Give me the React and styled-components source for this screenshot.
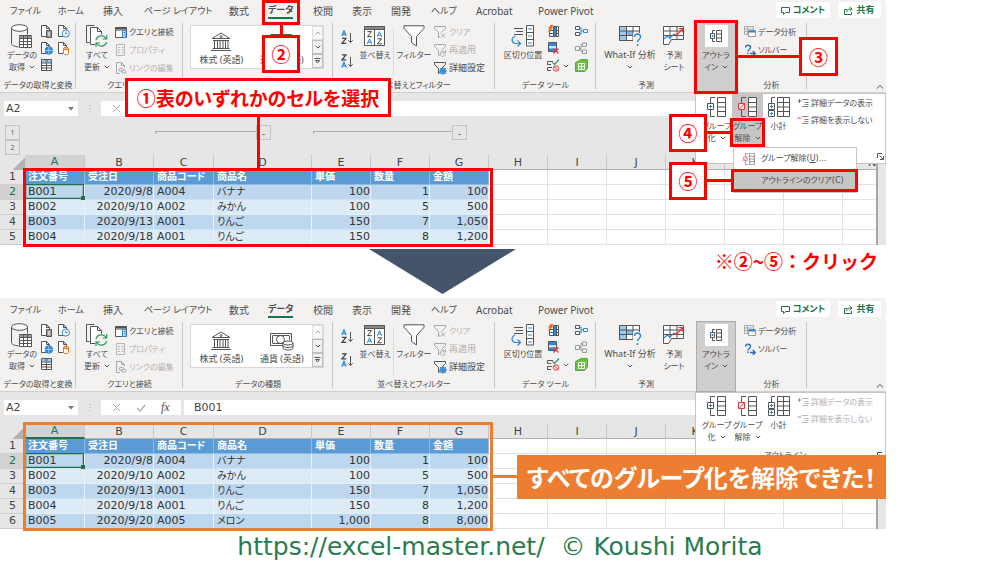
import React from 'react';
import styled, { createGlobalStyle, css } from 'styled-components';

const UI = '"Noto Sans", "Noto Sans CJK JP", sans-serif';
const CELL = '"DejaVu Sans", "Noto Sans CJK JP", sans-serif';
const RED = '#ff0000';
const ORANGE = '#ed7d31';
const GREEN = '#217346';

const GlobalStyle = createGlobalStyle`
  *, *::before, *::after { box-sizing: border-box; }
  body { margin: 0; background: #fff; overflow-x: hidden; }
  button, input { font: inherit; color: inherit; border: 0; margin: 0; padding: 0; background: none; }
  svg { flex: 0 0 auto; }
`;

const Page = styled.main`
  font-family: ${UI};
  font-size: 8px;
  line-height: 12px;
  color: #4c4c4c;
  font-feature-settings: 'palt';
`;

/* ---------- workbook window ---------- */
const Workbook = styled.section`
  position: relative;
  width: 88.6%;
  background: #e6e6e6;
`;

const TabBar = styled.nav`
  display: grid;
  grid-template-columns: 48px 45px 41px 85px 39px 45px 39px 39px 40px 45px 62px 1fr auto;
  height: 20px;
  padding-left: 10px;
  background: #f3f2f1;
`;

const Tab = styled.button`
  justify-self: start;
  height: 19px;
  font-size: ${(p) => (p.$kana ? 9 : 10)}px;
  line-height: 14px;
  border-top: 2px solid transparent;
  white-space: nowrap;
  ${(p) =>
    p.$active &&
    css`
      font-weight: 700;
      border-bottom: 2px solid ${GREEN};
    `}
`;

const TabActions = styled.div`
  display: flex;
  gap: 8px;
  padding: 2px 5px 0 0;
`;

const ActionButton = styled.button`
  display: flex;
  align-items: center;
  justify-content: center;
  gap: 3px;
  width: ${(p) => p.$width}px;
  height: 16px;
  border-radius: 2px;
  background: #fff;
  color: ${GREEN};
  font-size: 9px;
  font-weight: 700;
  white-space: nowrap;
`;

const Ribbon = styled.div`
  display: flex;
  position: relative;
  height: 73px;
  background: #f3f2f1;
  border-bottom: 1px solid #d0cfce;
`;

const Group = styled.div`
  position: relative;
  display: flex;
  flex: 0 0 auto;
  flex-direction: column;
  width: ${(p) => p.$width}px;
  padding-top: 3px;
  &::after {
    content: '';
    display: ${(p) => (p.$open ? 'none' : 'block')};
    position: absolute;
    right: 0;
    top: 3px;
    bottom: 3px;
    border-right: 1px solid #c8c6c4;
  }
`;

const GroupBody = styled.div`
  display: flex;
  flex: 1;
  padding-left: ${(p) => p.$pad}px;
`;

const GroupLabel = styled.div`
  height: 14px;
  line-height: 14px;
  text-align: center;
  white-space: nowrap;
`;

const BigButton = styled.button`
  display: flex;
  flex: 0 0 auto;
  flex-direction: column;
  align-items: center;
  width: ${(p) => p.$width}px;
  font-size: ${(p) => p.$size || 8}px;
  line-height: 12px;
  white-space: nowrap;
  align-self: flex-start;
`;

const BigIcon = styled.span`
  display: flex;
  align-items: center;
  justify-content: center;
  height: 26px;
`;

const Line = styled.span`
  display: flex;
  align-items: center;
  gap: 4px;
  height: 12px;
`;

const IconGrid = styled.div`
  display: grid;
  grid-template-columns: 13px 13px;
  grid-auto-rows: 13px;
  gap: 4px ${(p) => p.$gap}px;
  align-self: flex-start;
  padding-top: 2px;
  margin-left: ${(p) => p.$margin || 2}px;
`;

const IconButton = styled.button`
  display: flex;
  align-items: center;
  gap: 3px;
`;

const CommandList = styled.div`
  display: flex;
  flex-direction: column;
  align-self: flex-start;
  margin-left: ${(p) => p.$margin || 0}px;
`;

const Command = styled.button`
  display: flex;
  align-items: center;
  gap: 2px;
  height: ${(p) => p.$height || 18}px;
  font-size: ${(p) => p.$size || 8}px;
  white-space: nowrap;
  color: ${(p) => (p.disabled ? '#b3b1af' : '#4c4c4c')};
`;

const Gallery = styled.div`
  display: flex;
  width: 134px;
  height: 44px;
  margin-top: 2px;
  border: 1px solid #d8d6d4;
  background: #fff;
`;

const GalleryItem = styled.button`
  flex: 1;
  display: flex;
  flex-direction: column;
  align-items: center;
  justify-content: flex-end;
  padding-bottom: 2px;
  gap: 2px;
  font-size: 9px;
  white-space: nowrap;
`;

const GalleryScroll = styled.div`
  display: grid;
  grid-template-rows: repeat(3, 1fr);
  width: 11px;
`;

const ScrollButton = styled.button`
  display: flex;
  align-items: center;
  justify-content: center;
  border: 1px solid #c0bebc;
  background: #f3f2f1;
  opacity: ${(p) => (p.disabled ? 0.5 : 1)};
`;

const SortColumn = styled.div`
  display: flex;
  flex-direction: column;
  gap: 8px;
  width: 18px;
  padding-top: 7px;
`;

const Divider = styled.span`
  height: 48px;
  margin: 5px 3px 0 2px;
  border-left: 1px solid #dddbd9;
`;

const OutlineButton = styled.button`
  flex: 0 0 auto;
  display: flex;
  flex-direction: column;
  align-items: center;
  width: 40px;
  height: 71px;
  margin-top: 2px;
  padding-top: 2px;
  border: 1px solid #aeacaa;
  background: #d0cfce;
  line-height: 12px;
`;

const OutlineTile = styled.span`
  display: flex;
  align-items: center;
  justify-content: center;
  width: 23px;
  height: 22px;
  margin-bottom: 2px;
  background: #fff;
`;

const Collapse = styled.button`
  margin: auto 2px 2px auto;
  display: flex;
`;

const FormulaBar = styled.div`
  display: flex;
  height: 23px;
  padding: 8px 2px 0 4px;
  font-family: ${CELL};
`;

const NameBox = styled.div`
  display: flex;
  align-items: center;
  width: 74px;
  height: 15px;
  padding: 0 4px 0 2px;
  background: #fff;
`;

const BarInput = styled.input`
  min-width: 0;
  flex: 1;
  height: 15px;
  font-size: 11px;
  color: #444;
  outline: none;
`;

const Grip = styled.span`
  display: flex;
  justify-content: center;
  align-items: center;
  width: 23px;
`;

const FxBox = styled.div`
  display: flex;
  align-items: center;
  justify-content: space-around;
  width: 80px;
  padding: 0 4px;
  margin-right: 3px;
  background: #fff;
  button { display: flex; }
`;

const FxButton = styled.button`
  font: italic 12px/15px 'Liberation Serif', serif;
`;

const ValueBox = styled.div`
  display: flex;
  flex: 1;
  padding-left: 10px;
  background: #fff;
`;

/* ---------- outline strip over the columns ---------- */
const OutlineStrip = styled.div`
  display: flex;
  align-items: flex-start;
  height: 39px;
  padding: 9px 0 0 5px;
`;

const Levels = styled.div`
  display: flex;
  flex-direction: column;
  width: 15px;
`;

const LevelButton = styled.button`
  width: 15px;
  height: 15px;
  border: 1px solid #c6c4c2 !important;
  font-size: ${(p) => p.$size || 7}px;
  line-height: 12px;
  color: #666;
`;

const Bracket = styled.span`
  width: ${(p) => p.$width}px;
  height: 3px;
  margin: 6px 0 0 ${(p) => p.$margin}px;
  border: solid #b0aeac;
  border-width: 1px 0 0 1px;
`;

/* ---------- sheet ---------- */
const SheetArea = styled.div`
  overflow: hidden;
  padding-top: ${(p) => p.$gap}px;
  padding-right: 8px;
`;

const SheetClip = styled.div`
  overflow: hidden;
  border-right: 2px solid #a8a6a4;
  background: #fff;
`;

const Grid = styled.table`
  table-layout: fixed;
  width: 902px;
  border-collapse: separate;
  border-spacing: 0;
  font-family: ${CELL};
  font-size: 11px;
  line-height: 14px;
  color: #333;
  th, td { height: 15px; padding: 0; overflow: hidden; white-space: nowrap; }
`;

const ColHead = styled.th`
  font-weight: 400;
  text-align: center;
  background: ${(p) => (p.$on ? '#d2d2d2' : '#e6e6e6')};
  color: ${(p) => (p.$on ? GREEN : '#444')};
  border-right: 1px solid #c8c6c4;
  border-bottom: ${(p) => (p.$on ? `2px solid ${GREEN}` : '1px solid #b4b2b0')};
  line-height: 13px;
`;

const Corner = styled.th`
  background: linear-gradient(135deg, #e6e6e6 68%, #b4b2b0 68%);
`;

const RowHead = styled.th`
  font-weight: 400;
  text-align: center;
  background: ${(p) => (p.$on ? '#d2d2d2' : '#e6e6e6')};
  color: ${(p) => (p.$on ? GREEN : '#444')};
  border-bottom: 1px solid #d0cecc;
`;

const Cell = styled.td`
  border-right: 1px solid #e4e2e0;
  border-bottom: 1px solid #e4e2e0;
`;

const FieldCell = styled(Cell)`
  && { padding: 0 0 0 3px; }
  background: #5b9bd5;
  border-color: #8ebbe3;
  color: #fff;
  font-size: 10px;
  font-weight: 700;
`;

const DataCell = styled(Cell)`
  && { padding: 0 0 0 3px; ${(p) => p.$on && 'overflow: visible;'} }
  position: relative;
  background: ${(p) => (p.$dark ? '#bdd7ee' : '#ddebf7')};
  border-right-color: #eaf3fa;
  border-bottom-color: ${(p) => (p.$dark ? '#cfe2f3' : '#e6f0f9')};
  text-align: ${(p) => (p.$num ? 'right' : 'left')};
  font-size: ${(p) => (p.$kana ? 10 : 11)}px;
  ${(p) =>
    p.$on &&
    css`
      &::before {
        content: '';
        position: absolute;
        inset: -1px 0 0 0;
        border: 1px solid ${GREEN};
        box-shadow: inset 0 0 0 1px rgba(33, 115, 70, 0.25);
      }
      &::after {
        content: '';
        position: absolute;
        right: -1px;
        bottom: -1px;
        width: 4px;
        height: 4px;
        background: ${GREEN};
      }
    `}
`;

/* ---------- outline drop-down ---------- */
const Panel = styled.div`
  position: absolute;
  left: 695px;
  top: 93px;
  width: 191px;
  height: 71px;
  padding-left: 5px;
  border: 1px solid #c8c6c4;
  background: #fff;
  display: grid;
  grid-template-columns: repeat(3, 31px) 1fr;
  grid-template-rows: 1fr 14px;
`;

const PanelButton = styled(BigButton)`
  width: 31px;
  height: 53px;
  background: ${(p) => (p.$on ? '#c8c6c4' : 'transparent')};
`;

const PanelFooter = styled.div`
  grid-column: 1 / -1;
  display: flex;
  align-items: center;
  padding-right: 1px;
  span { flex: 1; text-align: center; padding-right: 8px; }
  button { display: flex; margin-left: auto; }
`;

const Menu = styled.div`
  position: absolute;
  left: 733px;
  top: 147px;
  width: 124px;
  border: 1px solid #c8c6c4;
  background: #fff;
  font-family: ${CELL};
`;

const MenuItem = styled.button`
  display: flex;
  align-items: center;
  width: 100%;
  height: 22px;
  padding-left: 9px;
  white-space: nowrap;
  background: ${(p) => (p.$on ? '#c8c6c4' : '#fff')};
`;

const MenuIcon = styled.span`
  display: flex;
  width: 18px;
`;

/* ---------- annotations ---------- */
const Frame = styled.div`
  position: absolute;
  left: ${(p) => p.$x}px;
  top: ${(p) => p.$y}px;
  width: ${(p) => p.$w}px;
  height: ${(p) => p.$h}px;
  border: 3px solid ${(p) => p.$color || RED};
  pointer-events: none;
`;

const Connector = styled(Frame)`
  border: 0;
  background: ${(p) => p.$color || RED};
`;

const Callout = styled(Frame)`
  display: flex;
  align-items: center;
  justify-content: center;
  background: #fff;
  color: ${RED};
  font-family: "Noto Sans CJK JP", sans-serif;
  font-size: 19px;
  line-height: 28px;
  font-weight: 700;
  white-space: nowrap;
`;

const Banner = styled.div`
  position: absolute;
  left: 517px;
  right: 0;
  top: 156px;
  height: 44px;
  display: flex;
  align-items: center;
  justify-content: center;
  background: ${ORANGE};
  color: #fff;
  font-family: "Noto Sans CJK JP", sans-serif;
  font-size: 24px;
  font-weight: 700;
  white-space: nowrap;
`;

const Between = styled.div`
  display: flex;
  justify-content: space-between;
  width: 88.6%;
  height: 53px;
  padding: 4px 8px 0 369px;
`;

const Arrow = styled.span`
  width: 147px;
  height: 45px;
  background: #44546a;
  clip-path: polygon(0 0, 100% 0, 50% 100%);
`;

const Note = styled.p`
  margin: 0;
  color: ${RED};
  font-family: "Noto Sans CJK JP", sans-serif;
  font-feature-settings: normal;
  font-size: 19px;
  line-height: 24px;
  font-weight: 700;
  white-space: nowrap;
`;

const Result = styled(Workbook)`
  border-top: 1px solid #f3f2f1;
`;

const Credit = styled.footer`
  padding-top: 3px;
  text-align: center;
  font-family: ${CELL};
  font-size: 25px;
  line-height: 30px;
  color: #2a7d50;
  white-space: pre;
  a { color: inherit; text-decoration: none; }
`;

/* ---------- icons ---------- */
const Icon = ({ w, h, children, color = '#555' }) => (
  <svg width={w} height={h} viewBox={`0 0 ${w} ${h}`} fill="none" stroke={color} strokeWidth="1" aria-hidden="true">
    {children}
  </svg>
);
const BLUE = '#2b88d8';
const Chevron = ({ up, color = '#555' }) => (
  <Icon w={6} h={4} color={color}><path d={up ? 'M.8 3.2 3 1l2.2 2.2' : 'M.8.8 3 3 5.2.8'} /></Icon>
);
const Database = () => (
  <Icon w={22} h={25}>
    <path d="M.5 4.500v15c0 2 3 3 7 3.500M16.500 4.500v6" fill="none" />
    <ellipse cx="8.500" cy="4" rx="8" ry="3.300" fill="#fafafa" />
    <path d="M8.500 11.500h12v12h-12z" fill="#fff" />
    <path d="M8.500 12h12v2.500h-12z" fill="#999" stroke="none" />
    <path d="M8.500 14.500h12M8.500 17.500h12M8.500 20.500h12M12.500 11.500v12M16.500 11.500v12" />
  </Icon>
);
const PageShape = () => <path d="M6 11.500H1.500V.5h5l3 3v2M6.500.5v3h3" fill="#fff" />;
const FileText = () => (
  <Icon w={13} h={13}><PageShape /><path d="M6.500 5.500h5v7h-5z" fill="#999" /><path d="M8 8h2M8 10h2" stroke="#fff" /></Icon>
);
const FileClock = () => (
  <Icon w={13} h={13}><PageShape /><circle cx="8.800" cy="8.500" r="3.600" fill="#fff" stroke={BLUE} /><path d="M8.800 6.500v2.200h1.800" stroke={BLUE} /></Icon>
);
const FileWeb = () => (
  <Icon w={13} h={13}><PageShape /><circle cx="8.800" cy="8.500" r="3.800" fill={BLUE} stroke={BLUE} /><path d="M5 8.500h7.500M8.800 5v7" stroke="#bfe0f7" strokeWidth=".7" /></Icon>
);
const FileDb = () => (
  <Icon w={13} h={13}><PageShape /><path d="M6.500 6.500v5c0 1.500 5 1.500 5 0v-5" fill="#fff" stroke="#e8711c" /><ellipse cx="9" cy="6.500" rx="2.500" ry="1.300" fill="#f6b58a" stroke="#e8711c" /></Icon>
);
const TableIcon = () => (
  <Icon w={13} h={13}><path d="M1.500.5h10v11h-10z" fill="#fff" /><path d="M2 1h9v3H2z" fill="#9cc9ef" stroke="none" /><path d="M1.500 4h10M1.500 6.500h10M1.500 9h10M6.500 4v8M5 2h3" /></Icon>
);
const Refresh = () => (
  <Icon w={22} h={24}>
    <path d="M3.500 18.500H.5V1.500h8" /><path d="M9 20.500H4.500V3.500h7l4 4v4M11.500 3.500v4h4" fill="#fff" />
    <circle cx="15.300" cy="17" r="6.500" fill="#f3f2f1" stroke="none" />
    <g stroke="#2e9a5c" strokeWidth="1.200"><path d="M10 16a5.500 5.500 0 0 1 10-1.500M20.700 11v4h-4M20.700 18a5.500 5.500 0 0 1-10 1.500M10 23v-4h4" /></g>
  </Icon>
);
const QueryPane = () => (
  <Icon w={12} h={11}><path d="M.5.5h11v10H.5zM.5 3h11" fill="#fff" /><path d="M.5 1.500h11" strokeWidth="1.600" /><path d="M7.500 3.500h3.500v7H7.500z" fill="#cfe6f8" stroke={BLUE} /><path d="M8.500 5.500h1.500M8.500 8h1.500" stroke={BLUE} /></Icon>
);
const PropsIcon = () => (
  <Icon w={12} h={12} color="#b8b6b4"><path d="M1.500.5h8v11h-8z" /><path d="M3 3.500h2M3 6h2M3 8.500h2M6.500 3.500h2M6.500 6h2M6.500 8.500h2" /></Icon>
);
const LinkIcon = () => (
  <Icon w={12} h={12} color="#aaa8a6"><path d="M5 11.500H1.500V.5h5l3 3v2M6.500.5v3h3" /><rect x="4" y="6.500" width="4.500" height="2.500" rx="1.200" /><rect x="6.500" y="8.500" width="4.500" height="2.500" rx="1.200" /></Icon>
);
const Bank = () => (
  <Icon w={22} h={20}><path d="M2 6.500 11 1l9 5.500zM3 8.500h16M4.500 9v7M7.500 9v7M10 9v7M13 9v7M15.500 9v7M18 9v7M2.500 16.500h17M1 18.500h20" /><circle cx="11" cy="4.500" r="1" /></Icon>
);
const Money = () => (
  <Icon w={24} h={20}><path d="M.5 2.500h21v12H.5zM2.500 4.500h17M2.500 12.500h12M2.500 5v7M19.500 5v4" /><circle cx="10.500" cy="8.500" r="4" />
    <path d="M13 12v5c0 2.700 10 2.700 10 0v-5" fill="#fff" /><ellipse cx="18" cy="12" rx="5" ry="2" fill="#fff" /><path d="M13 14.500c0 2.700 10 2.700 10 0" /></Icon>
);
const A = <path d="M.8 6 3 .8 5.200 6M1.500 4.300h3" stroke={BLUE} />;
const Z = <path d="M1 .8h4L1 5.800h4.200" stroke="#444" />;
const SortIcon = ({ desc }) => (
  <Icon w={13} h={16}>
    <g strokeWidth="1.200">{desc ? Z : A}<g transform="translate(0 7.500)">{desc ? A : Z}</g></g>
    <path d="M9.500 3v9.500M7.300 10.300l2.200 2.200 2.200-2.200" />
  </Icon>
);
const SortDialog = () => (
  <Icon w={22} h={22}><path d="M.5 1.500h20v19H.5z" fill="#fff" /><path d="M.5 1.500h20v3H.5z" fill="#888" /><path d="M10.500 5v15.500" />
    <g transform="translate(2.500 5.800)">{Z}</g><g transform="translate(2.500 13)">{A}</g><g transform="translate(12.500 5.800)">{A}</g><g transform="translate(12.500 13)">{Z}</g></Icon>
);
const Funnel = () => (
  <Icon w={22} h={22}><path d="M1 .8h20v2.500l-7.500 8.200v9.500l-5-3.500v-6L1 3.300z" fill="#fff" /></Icon>
);
const SmallFunnel = ({ kind }) => (
  <Icon w={13} h={13} color={kind === 'gear' ? '#555' : '#aaa8a6'}>
    <path d="M.5.5h11v2L7.500 6.500M.5.5v2l4 4v5l1.500-1" />
    {kind === 'clear' && <path d="m7 7.500 4 4M11 7.500l-4 4" />}
    {kind === 'redo' && <path d="M11 8.500a2.500 2.500 0 1 0 .3 2M11.500 6v3h-3" />}
    {kind === 'gear' && <><circle cx="9" cy="9" r="2.200" stroke={BLUE} strokeWidth="1.600" /><path d="M9 5v8M5 9h8M6.200 6.200l5.600 5.600M11.800 6.200l-5.600 5.600" stroke={BLUE} /></>}
  </Icon>
);
const TextColumns = () => (
  <Icon w={24} h={22}><path d="M3 3.500h9M5 6.500h7M3 9.500h9" /><path d="M4 11c-4 2-4 6 0 7.500h5M6.500 15.500l3 3-3 3" stroke={BLUE} strokeWidth="1.200" />
    <path d="M15.500.5h7v20.500h-7zM15.500 7.500h7M15.500 14.500h7" fill="#fff" /><path d="M17 4h4M17 11h4M17 18h4" stroke={BLUE} /></Icon>
);
const FlashFill = () => (
  <Icon w={13} h={13}><path d="M2.500 11.500v-6h4v-4h5v10zM2.500 8.500h9M6.500 5.500h5M6.500 5v6.500M9.500 2v9.500" fill="#fff" /><path d="M7 2h2v9.500H7z" fill={BLUE} stroke="none" /><path d="M3.500 0h3L5 2.500h1.500L1 7l1.500-3.500H1z" fill="#e8711c" stroke="none" /></Icon>
);
const RemoveDup = () => (
  <Icon w={13} h={13}><path d="M1.500.5h8v9h-8z" fill="#cfe6f8" /><path d="M2 1h7v3H2zM2 6.500h7V9H2z" fill={BLUE} stroke="none" /><path d="m6.500 6.500 5 5M11.500 6.500l-5 5" stroke="#e8383d" strokeWidth="1.300" /></Icon>
);
const Validate = () => (
  <Icon w={13} h={13}><path d="M6 2.500H.5v3H4M5 8.500H.5v3H4" /><path d="m5.500 3.500 2 2 4.500-5" stroke="#2e9a5c" strokeWidth="1.200" /><circle cx="9" cy="9.500" r="2.700" stroke="#e8383d" /><path d="m7 7.500 4 4" stroke="#e8383d" /></Icon>
);
const Consolidate = () => (
  <Icon w={13} h={13}><path d="M.5 1.500h4v3h-4zM.5 7.500h4v3h-4z" fill="#fff" /><path d="M4.500 3H6v6H4.500M6 6h2.500" stroke={BLUE} /><path d="M8.500 4.500h4v3h-4z" fill="#fff" stroke={BLUE} /></Icon>
);
const Relations = () => (
  <Icon w={13} h={13} color="#999"><path d="M.5 4.500h4v4h-4zM7.500 1h4v3.500h-4zM7.500 8h4v3.500h-4zM4.500 6.500H6M6 2.500v7M6 2.500h1.500M6 9.500h1.500" /></Icon>
);
const DataModel = () => (
  <Icon w={13} h={13}><path d="M.5 3.500 6 .5h6.500v8.500l-3 3.500h-9z" fill="#6cbf45" stroke="#5aae36" /><path d="M3.500 4.500h6v6h-6zM3.500 7.500h6M6.500 4.500v6" stroke="#fff" /></Icon>
);
const WhatIf = () => (
  <Icon w={23} h={22}><path d="M.5 1.500h20v14H.5z" fill="#fff" /><path d="M1 2h6v13H1z" fill="#9cc9ef" stroke="none" /><path d="M7 6h7v5H7z" fill={BLUE} stroke="none" opacity=".6" /><path d="M.5 1.500h20v14H.5zM.5 6h20M.5 10.500h20M7.500 1.500v14M14 1.500v14" />
    <path d="M14 8h9v14h-9z" fill="#f3f2f1" stroke="none" /><path d="M15.500 12c0-4 6-4 6 0 0 2.500-3 2.500-3 5M18.500 19v2" stroke={BLUE} strokeWidth="1.400" /></Icon>
);
const Forecast = () => (
  <Icon w={22} h={22}><path d="M.5 1.500h20v13h-12l-3 5h-5zM.5 6h20M.5 10.500h20M7 1.500v13M14 1.500v13" fill="#fff" /><path d="m1 14 3-3 3 2 4-4" stroke={BLUE} strokeWidth="1.200" /><path d="m11 9 3 1 5-6M15.500 3.500h4v4" stroke="#e8383d" strokeWidth="1.200" /></Icon>
);
const OutlineSmall = () => (
  <Icon w={14} h={14}><path d="M6 1.500H3.500V4M6 12.500H3.500V10M7.500 1.500h5v11h-5zM7.500 5h5M7.500 9h5M1.500 4.500h4v5h-4z" fill="#fff" /><path d="M2.500 7h2M3.500 6v2" stroke={BLUE} /></Icon>
);
const Analysis = () => (
  <Icon w={12} h={12} color="#aaa"><path d="M.5.5h9v8h-9zM.5 3h9M.5 5.500h9M3.500.5v8" /><path d="M4.500 4.500h7v6h-7z" fill="#fff" stroke="#999" /><path d="M4.500 5.500h7" stroke={BLUE} strokeWidth="2" /></Icon>
);
const Solver = () => (
  <Icon w={12} h={12}><path d="M1.500 3.500c0-3 5-3 5 0 0 2-2.500 2-2.500 4M4 8.500V10M6 9.500h5M8.800 7l2.500 2.500L8.800 12" stroke="#2f6fb5" strokeWidth="1.400" /></Icon>
);
const Outline = ({ w = 19, h = 20, kind }) => (
  <svg width={w} height={h} viewBox="0 0 19 20" fill="none" stroke="#555" aria-hidden="true">
    <path d="M8 .5H3.500V6M8 19.500H3.500V13" />
    <path d="M10.500.5h8v19h-8zM10.500 5.500h8M10.500 10h8M10.500 14.500h8" fill="#fff" />
    <path d="M.5 6.500h6v6h-6z" fill="#fff" stroke={kind === 'un' ? '#e8383d' : '#555'} />
    {kind === 'un' ? <path d="m1 12.500 5.500-6" stroke="#e8383d" /> : <path d="M1.800 9.500h3.500M3.500 7.800v3.500" stroke={BLUE} />}
  </svg>
);
const Subtotal = () => (
  <Icon w={22} h={20}><path d="M7 .5H3.500V6" /><path d="M9.500.5h12v19h-12zM15.500.5v19M9.500 5.500h12M9.500 10h12M9.500 14.500h12M.5 6.500h6v6h-6zM.5 13.500h6v6h-6z" fill="#fff" /><path d="M1.800 9.500h3.500M3.500 7.800v3.500M1.800 16.500h3.500M3.500 14.800v3.500" stroke={BLUE} /></Icon>
);
const Detail = ({ plus, off }) => (
  <Icon w={12} h={10} color={off ? '#aaa8a6' : '#666'}><path d="M5 1.500h6.500M7.500 4.500h4M5 8.500h6.500M7.500 6.500h4" strokeWidth=".8" /><path d={plus ? 'M.5 3h4M2.500 1v4' : 'M.5 3h3.500'} stroke={off ? '#999' : plus ? '#2e9a5c' : '#e8383d'} /></Icon>
);

/* ---------- parts ---------- */
const TABS = [
  ['ファイル', 1], ['ホーム', 1], ['挿入'], ['ページ レイアウト', 1], ['数式'], ['データ', 1],
  ['校閲'], ['表示'], ['開発'], ['ヘルプ', 1], ['Acrobat'], ['Power Pivot'],
];

function RibbonTabs() {
  return (
    <TabBar>
      {TABS.map(([name, kana]) => (
        <Tab key={name} $kana={kana} $active={name === 'データ'}>{name}</Tab>
      ))}
      <TabActions>
        <ActionButton $width={54}>
          <Icon w={9} h={9} color={GREEN}><path d="M.5 1.500h8v5h-4l-2 2v-2h-2z" /></Icon>コメント
        </ActionButton>
        <ActionButton $width={43}>
          <Icon w={9} h={9} color={GREEN}><path d="M3 3.500H.5v5h7V6M2.500 6c.5-2.500 2-3 4.500-3M5.500.8 8 3 5.500 5.200" /></Icon>共有
        </ActionButton>
      </TabActions>
    </TabBar>
  );
}

function RibbonBody({ typesLabel }) {
  return (
    <Ribbon>
      <Group $width={76}>
        <GroupBody $pad={6}>
          <BigButton $width={32}>
            <BigIcon><Database /></BigIcon><Line>データの</Line><Line>取得<Chevron /></Line>
          </BigButton>
          <IconGrid $gap={4}>
            <IconButton aria-label="テキスト"><FileText /></IconButton>
            <IconButton aria-label="最近のソース"><FileClock /></IconButton>
            <IconButton aria-label="Web"><FileWeb /></IconButton>
            <IconButton aria-label="既存の接続"><FileDb /></IconButton>
            <IconButton aria-label="テーブル"><TableIcon /></IconButton>
          </IconGrid>
        </GroupBody>
        <GroupLabel>データの取得と変換</GroupLabel>
      </Group>
      <Group $width={107}>
        <GroupBody $pad={5}>
          <BigButton $width={32}>
            <BigIcon><Refresh /></BigIcon><Line>すべて</Line><Line>更新<Chevron /></Line>
          </BigButton>
          <CommandList $margin={2}>
            <Command><QueryPane />クエリと接続</Command>
            <Command disabled><PropsIcon />プロパティ</Command>
            <Command disabled><LinkIcon />リンクの編集</Command>
          </CommandList>
        </GroupBody>
        <GroupLabel>クエリと接続</GroupLabel>
      </Group>
      <Group $width={150}>
        <GroupBody $pad={7}>
          <Gallery>
            <GalleryItem><Bank />株式 (英語)</GalleryItem>
            <GalleryItem><Money />通貨 (英語)</GalleryItem>
            <GalleryScroll>
              <ScrollButton disabled aria-label="上へ"><Chevron up /></ScrollButton>
              <ScrollButton aria-label="下へ"><Chevron /></ScrollButton>
              <ScrollButton aria-label="その他"><Icon w={7} h={6}><path d="M.5.5h6M1.500 2.500h4l-2 2.500z" /></Icon></ScrollButton>
            </GalleryScroll>
          </Gallery>
        </GroupBody>
        <GroupLabel>{typesLabel}</GroupLabel>
      </Group>
      <Group $width={162}>
        <GroupBody $pad={8}>
          <SortColumn>
            <IconButton aria-label="昇順"><SortIcon /></IconButton>
            <IconButton aria-label="降順"><SortIcon desc /></IconButton>
          </SortColumn>
          <BigButton $width={32}>
            <BigIcon><SortDialog /></BigIcon><Line>並べ替え</Line>
          </BigButton>
          <Divider />
          <BigButton $width={34}>
            <BigIcon><Funnel /></BigIcon><Line>フィルター</Line>
          </BigButton>
          <CommandList $margin={3}>
            <Command disabled><SmallFunnel kind="clear" />クリア</Command>
            <Command $size={9} disabled><SmallFunnel kind="redo" />再適用</Command>
            <Command $size={9}><SmallFunnel kind="gear" />詳細設定</Command>
          </CommandList>
        </GroupBody>
        <GroupLabel>並べ替えとフィルター</GroupLabel>
      </Group>
      <Group $width={101}>
        <GroupBody $pad={7}>
          <BigButton $width={42}>
            <BigIcon><TextColumns /></BigIcon><Line>区切り位置</Line>
          </BigButton>
          <IconGrid $gap={15} $margin={3}>
            <IconButton aria-label="フラッシュ フィル"><FlashFill /></IconButton>
            <IconButton aria-label="統合"><Consolidate /></IconButton>
            <IconButton aria-label="重複の削除"><RemoveDup /></IconButton>
            <IconButton aria-label="リレーションシップ"><Relations /></IconButton>
            <IconButton aria-label="データの入力規則"><Validate /><Chevron /></IconButton>
            <IconButton aria-label="データ モデル"><DataModel /></IconButton>
          </IconGrid>
        </GroupBody>
        <GroupLabel>データ ツール</GroupLabel>
      </Group>
      <Group $width={100} $open>
        <GroupBody $pad={5}>
          <BigButton $width={58} $size={9}>
            <BigIcon><WhatIf /></BigIcon><Line>What-If 分析</Line><Line><Chevron /></Line>
          </BigButton>
          <BigButton $width={30}>
            <BigIcon><Forecast /></BigIcon><Line>予測</Line><Line>シート</Line>
          </BigButton>
        </GroupBody>
        <GroupLabel>予測</GroupLabel>
      </Group>
      <OutlineButton>
        <OutlineTile><OutlineSmall /></OutlineTile><Line>アウトラ</Line><Line>イン<Chevron /></Line>
      </OutlineButton>
      <Group $width={71}>
        <GroupBody $pad={8}>
          <CommandList>
            <Command><Analysis />データ分析</Command>
            <Command><Solver />ソルバー</Command>
          </CommandList>
        </GroupBody>
        <GroupLabel>分析</GroupLabel>
      </Group>
      <Collapse aria-label="リボンを折りたたむ"><Icon w={8} h={6}><path d="m.8 4.500 3.200-3 3.200 3" /></Icon></Collapse>
    </Ribbon>
  );
}

function Formula({ value }) {
  return (
    <FormulaBar>
      <NameBox>
        <BarInput aria-label="名前ボックス" defaultValue="A2" />
        <Icon w={6} h={4}><path d="M0 0h6L3 3.500z" fill="#777" stroke="none" /></Icon>
      </NameBox>
      <Grip><Icon w={2} h={10} color="#aaa"><path d="M1 1v8" strokeDasharray="1 2" /></Icon></Grip>
      <FxBox>
        <button aria-label="キャンセル"><Icon w={9} h={9} color="#aaa"><path d="m1 1 7 7M8 1 1 8" /></Icon></button>
        <button aria-label="入力"><Icon w={10} h={8} color="#aaa"><path d="m1 4 3 3 5-6" strokeWidth="1.300" /></Icon></button>
        <FxButton>fx</FxButton>
      </FxBox>
      <ValueBox><BarInput aria-label="数式バー" defaultValue={value} /></ValueBox>
    </FormulaBar>
  );
}

const COLS = 'ABCDEFGHIJKLMN'.split('');
const WIDTHS = [60, 69, 60, 98, 59, 59, 59, 59, 59, 59, 59, 59, 59, 59];
const FIELDS = ['注文番号', '受注日', '商品コード', '商品名', '単価', '数量', '金額'];
const ORDERS = [
  ['B001', '2020/9/8', 'A004', 'バナナ', '100', '1', '100'],
  ['B002', '2020/9/10', 'A002', 'みかん', '100', '5', '500'],
  ['B003', '2020/9/13', 'A001', 'りんご', '150', '7', '1,050'],
  ['B004', '2020/9/18', 'A001', 'りんご', '150', '8', '1,200'],
  ['B005', '2020/9/20', 'A005', 'メロン', '1,000', '8', '8,000'],
];
const EMPTY = COLS.slice(7);
/* columns whose letters lie behind the open drop-down */
const BEHIND_PANEL = ['L', 'M'];

function Sheet({ count, gap }) {
  return (
    <SheetArea $gap={gap}>
      <SheetClip>
        <Grid>
          <colgroup>
            <col width="25" />
            {WIDTHS.map((w, i) => <col key={COLS[i]} width={w} />)}
          </colgroup>
          <thead>
            <tr>
              <Corner />
              {COLS.map((c) => (
                <ColHead key={c} $on={c === 'A'} scope="col">{BEHIND_PANEL.includes(c) ? null : c}</ColHead>
              ))}
            </tr>
          </thead>
          <tbody>
            <tr>
              <RowHead scope="row">1</RowHead>
              {FIELDS.map((f) => <FieldCell key={f}>{f}</FieldCell>)}
              {EMPTY.map((c) => <Cell key={c} />)}
            </tr>
            {ORDERS.slice(0, count).map((row, r) => (
              <tr key={row[0]}>
                <RowHead scope="row" $on={r === 0}>{r + 2}</RowHead>
                {row.map((v, c) => (
                  <DataCell key={FIELDS[c]} $dark={r % 2 === 0} $num={c === 1 || c > 3} $kana={c === 3} $on={r === 0 && c === 0}>
                    {v}
                  </DataCell>
                ))}
                {EMPTY.map((c) => <Cell key={c} />)}
              </tr>
            ))}
          </tbody>
        </Grid>
      </SheetClip>
    </SheetArea>
  );
}

function OutlinePanel({ active }) {
  return (
    <Panel>
      <PanelButton><BigIcon><Outline /></BigIcon><Line>グループ</Line><Line>化<Chevron /></Line></PanelButton>
      <PanelButton $on={active}><BigIcon><Outline kind="un" /></BigIcon><Line>グループ</Line><Line>解除<Chevron /></Line></PanelButton>
      <PanelButton><BigIcon><Subtotal /></BigIcon><Line>小計</Line></PanelButton>
      <CommandList $margin={3}>
        <Command $height={17} disabled={!active}><Detail plus off={!active} />詳細データの表示</Command>
        <Command $height={17} disabled={!active}><Detail off={!active} />詳細を表示しない</Command>
      </CommandList>
      <PanelFooter>
        {!active && <span>アウトライン</span>}
        <button aria-label="アウトラインの設定"><Icon w={7} h={7}><path d="M.5 5V.5H5M2.500 2.500l4 4M6.500 3v3.500H3" /></Icon></button>
      </PanelFooter>
    </Panel>
  );
}

export default function App() {
  return (
    <Page>
      <GlobalStyle />
      <Workbook>
        <RibbonTabs />
        <RibbonBody />
        <Formula value="" />
        <OutlineStrip>
          <Levels>
            <LevelButton>1</LevelButton>
            <LevelButton>2</LevelButton>
          </Levels>
          <Bracket $width={101} $margin={135} />
          <LevelButton $size={10}>-</LevelButton>
          <Bracket $width={139} $margin={42} />
          <LevelButton $size={10}>-</LevelButton>
        </OutlineStrip>
        <Sheet count={4} gap={0} />
        <OutlinePanel active />
        <Menu>
          <MenuItem><MenuIcon><Outline kind="un" w={12} h={12} /></MenuIcon>グループ解除(<u>U</u>)...</MenuItem>
          <MenuItem $on><MenuIcon />アウトラインのクリア(C)</MenuItem>
        </Menu>

        <Frame $x={262} $y={0} $w={38} $h={25} />
        <Connector $x={280} $y={25} $w={3} $h={10} />
        <Callout $x={262} $y={35} $w={38} $h={38}>②</Callout>
        <Connector $x={257} $y={116} $w={3} $h={52} />
        <Callout $x={125} $y={78} $w={266} $h={39}>①表のいずれかのセルを選択</Callout>
        <Frame $x={23} $y={168} $w={470} $h={79} />
        <Frame $x={694} $y={20} $w={44} $h={74} />
        <Connector $x={738} $y={55} $w={61} $h={3} />
        <Callout $x={799} $y={37} $w={39} $h={39}>③</Callout>
        <Frame $x={730} $y={118} $w={35} $h={29} />
        <Connector $x={707} $y={131} $w={23} $h={3} />
        <Callout $x={669} $y={114} $w={38} $h={38}>④</Callout>
        <Frame $x={731} $y={169} $w={127} $h={23} />
        <Connector $x={707} $y={179} $w={24} $h={3} />
        <Callout $x={669} $y={162} $w={38} $h={38}>⑤</Callout>
      </Workbook>

      <Between>
        <Arrow />
        <Note>※②~⑤：クリック</Note>
      </Between>

      <Result>
        <RibbonTabs />
        <RibbonBody typesLabel="データの種類" />
        <Formula value="B001" />
        <Sheet count={5} gap={9} />
        <OutlinePanel />
        <Frame $x={23} $y={123} $w={470} $h={109} $color={ORANGE} />
        <Connector $x={493} $y={176} $w={24} $h={3} $color={ORANGE} />
        <Banner>すべてのグループ化を解除できた！</Banner>
      </Result>

      <Credit><a href="https://excel-master.net/">https://excel-master.net/</a>{'  © Koushi Morita'}</Credit>
    </Page>
  );
}
